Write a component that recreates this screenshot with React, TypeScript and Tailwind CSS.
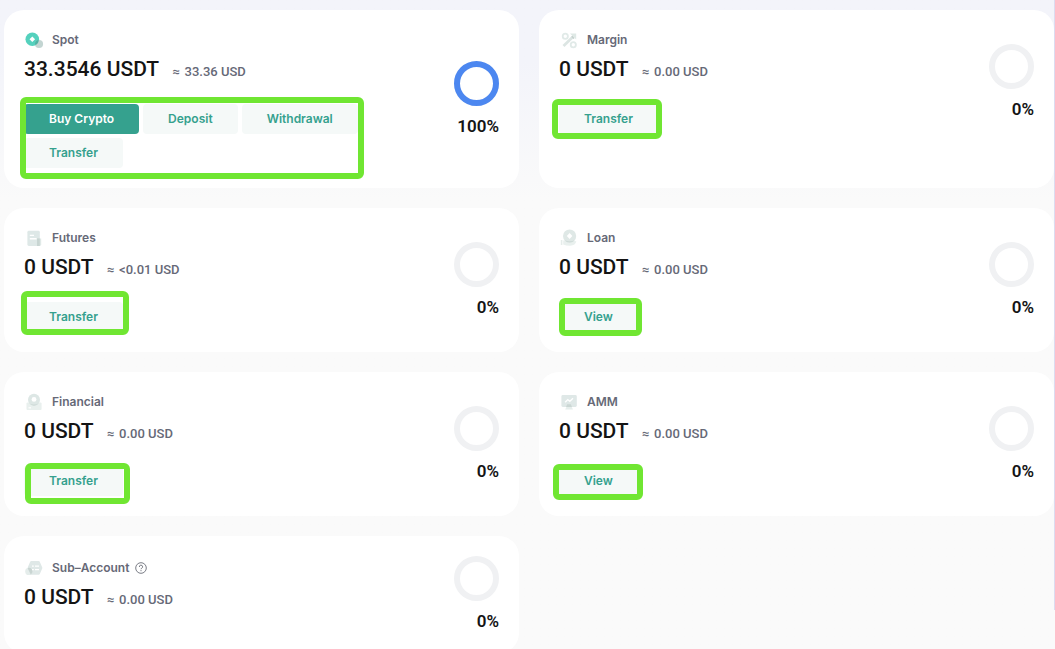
import React from 'react';
import { clsx } from 'clsx';

type Account = {
  name: string;
  icon: React.ReactNode;
  amount: string;
  usd: string;
  percent: number;
  actions: string[];
  highlight?: string;
  help?: boolean;
};

const SpotIcon = () => (
  <svg width="20" height="20" viewBox="0 0 20 20" aria-hidden="true">
    <circle cx="8.3" cy="9.2" r="6.8" fill="#54d1bd" />
    <path d="M8.3 6.4L11.1 9.2L8.3 12L5.5 9.2Z" fill="#fff" />
    <circle cx="15" cy="14" r="4.1" fill="#a3bfba" fillOpacity="0.65" />
    <path d="M11 13.4A4.1 4.1 0 0 1 14.7 9.9A6.8 6.8 0 0 1 11.7 15.1A4.1 4.1 0 0 1 11 13.4Z" fill="#4fb3a3" />
  </svg>
);

const MarginIcon = () => (
  <svg width="20" height="20" viewBox="0 0 20 20" fill="none" aria-hidden="true">
    <circle cx="6.3" cy="6.2" r="2.6" stroke="#e1eae8" strokeWidth="1.8" />
    <circle cx="14.3" cy="14.8" r="2.6" stroke="#e1eae8" strokeWidth="1.8" />
    <path d="M4.5 16L14.5 6.2" stroke="#dce5e3" strokeWidth="2.8" />
    <path d="M11 3.4H17.2V9.6Z" fill="#dfe9e6" />
    <path d="M12.8 6.2L15 8.6" stroke="#c5d1ce" strokeWidth="1.4" />
  </svg>
);

const FuturesIcon = () => (
  <svg width="20" height="20" viewBox="0 0 20 20" aria-hidden="true">
    <rect x="3.4" y="2.8" width="12.4" height="15.2" rx="1.4" fill="#dee8e7" />
    <path d="M13 10.4H17.2V16.6Q17.2 18 15.7 18H13Z" fill="#e0e9e7" />
    <path d="M13 10.4H15.8V18H13Z" fill="#c8d5d2" />
    <path d="M5.8 7.4H10M5.8 10.8H12.6" stroke="#fff" strokeWidth="1.4" />
  </svg>
);

const CoinHandIcon = () => (
  <svg width="20" height="20" viewBox="0 0 20 20" aria-hidden="true">
    <path d="M1.8 12H3.4V17H1.8Z" fill="#e6edeb" />
    <path d="M4.2 12.4H9L17.4 13.2Q16.5 16.8 12.5 17.6Q8 18 4.2 16.4Z" fill="#e9f0ee" />
    <circle cx="10.6" cy="8" r="6.6" fill="#dfe8e6" />
    <path d="M5.5 12.2A6.6 6.6 0 0 0 15.7 12.2Q10.6 14.4 5.5 12.2Z" fill="#cfdbd8" />
    <path d="M10.6 5L13.4 8L10.6 11L7.8 8Z" fill="#fff" />
  </svg>
);

const FinancialIcon = () => (
  <svg width="20" height="20" viewBox="0 0 20 20" aria-hidden="true">
    <path d="M2.5 11.6Q2.5 10.4 3.8 10.4H16.3Q17.6 10.4 17.6 11.6V17Q17.6 18 16.5 18H3.6Q2.5 18 2.5 17Z" fill="#e9f0ee" />
    <circle cx="10" cy="7.8" r="6" fill="#dde7e5" />
    <path d="M5.4 11.6A6 6 0 0 0 14.6 11.6Q10 13.4 5.4 11.6Z" fill="#cedad7" />
    <circle cx="10" cy="7.4" r="2.4" fill="#fff" />
    <path d="M4.5 15.8H7" stroke="#fff" strokeWidth="1.2" />
  </svg>
);

const AmmIcon = () => (
  <svg width="20" height="20" viewBox="0 0 20 20" aria-hidden="true">
    <rect x="2.4" y="3" width="15.4" height="12" rx="1.4" fill="#dfe8e7" />
    <path d="M8.4 13H11.8L14 17.6H6.2Z" fill="#e6eeec" />
    <path d="M8.2 12.2H11.8L13 15H7Z" fill="#cbd7d4" />
    <path d="M6.2 10.2L8.8 7.6L10.8 9.4L14 6.2" stroke="#fff" strokeWidth="1.4" fill="none" />
  </svg>
);

const SubAccountIcon = () => (
  <svg width="20" height="20" viewBox="0 0 20 20" aria-hidden="true">
    <circle cx="4.8" cy="13.4" r="3.6" fill="#e5edeb" />
    <path d="M7.4 3H14.6Q15.4 3 15.8 3.7L18.2 9.2Q18.4 9.8 18.2 10.4L15.8 16Q15.4 16.8 14.6 16.8H7.4Q6.6 16.8 6.2 16L3.8 10.4Q3.6 9.8 3.8 9.2L6.2 3.7Q6.6 3 7.4 3Z" fill="#dfe8e7" />
    <path d="M4.4 9.8A3.6 3.6 0 0 1 8.2 14.8L6.8 16.6L3.8 10.4Z" fill="#c9d5d2" />
    <path d="M8 8.2H9.8M11 8.2H15M8 11.6H9.8M11 11.6H15" stroke="#fff" strokeWidth="1.2" />
  </svg>
);

const HelpIcon = () => (
  <svg width="12" height="12" viewBox="0 0 12 12" fill="none" stroke="#6b6e78" aria-hidden="true">
    <circle cx="6" cy="6" r="5.3" strokeWidth="0.9" />
    <path d="M4.4 4.9A1.6 1.6 0 1 1 6.7 6.2Q6 6.5 6 7.2" strokeWidth="1" />
    <path d="M6 8.2V9.2" strokeWidth="1" />
  </svg>
);

const ACCOUNTS: Account[] = [
  {
    name: 'Spot',
    icon: <SpotIcon />,
    amount: '33.3546',
    usd: '33.36',
    percent: 100,
    actions: ['Buy Crypto', 'Deposit', 'Withdrawal', 'Transfer'],
    highlight: '-left-1 -top-[7px] w-[344px] h-[82px]',
  },
  { name: 'Margin', icon: <MarginIcon />, amount: '0', usd: '0.00', percent: 0, actions: ['Transfer'], highlight: '-left-[7px] -top-[5px] w-[110px] h-10' },
  { name: 'Futures', icon: <FuturesIcon />, amount: '0', usd: '<0.01', percent: 0, actions: ['Transfer'], highlight: '-left-[3px] -top-[11px] w-[108px] h-11' },
  { name: 'Loan', icon: <CoinHandIcon />, amount: '0', usd: '0.00', percent: 0, actions: ['View'], highlight: 'left-0 -top-1 w-[83px] h-[38px]' },
  { name: 'Financial', icon: <FinancialIcon />, amount: '0', usd: '0.00', percent: 0, actions: ['Transfer'], highlight: 'left-px -top-[3px] w-[105px] h-[41px]' },
  { name: 'AMM', icon: <AmmIcon />, amount: '0', usd: '0.00', percent: 0, actions: ['View'], highlight: '-left-[6px] -top-[2px] w-[90px] h-9' },
  { name: 'Sub–Account', icon: <SubAccountIcon />, amount: '0', usd: '0.00', percent: 0, actions: [], help: true },
];

const App: React.FC = () => {
  return (
    <div className="flex min-h-screen bg-[#fafafa] bg-linear-to-b from-[#f3f4fa] from-[60px] to-[#fafafa] to-[200px] font-['Inter','Liberation_Sans',sans-serif]">
      <main className="grid flex-1 grid-cols-2 content-start gap-5 pt-2.5 pl-1">
        {ACCOUNTS.map(a => (
          <AccountCard key={a.name} account={a} />
        ))}
      </main>
      <div className="h-[610px] w-px bg-[#dcdcf0]" />
    </div>
  );
};

const AccountCard = ({ account }: { account: Account }) => (
  <section className="rounded-[20px] bg-white p-5">
    <div className="flex items-center justify-between">
      <div>
        <h2 className="flex h-5 items-center gap-2 text-xs font-semibold text-[#666977]">
          {account.icon}
          <span>{account.name}</span>
          {account.help && (
            <button type="button" aria-label="Help" className="-ml-0.5">
              <HelpIcon />
            </button>
          )}
        </h2>
        <div className="mt-1 flex items-baseline gap-[13px] font-['Roboto','Liberation_Sans',sans-serif] font-medium">
          <span className="text-[21px] leading-[30px] text-[#141414]">{account.amount} USDT</span>
          <span className="flex gap-[5px] text-[13px] leading-5 text-[#666977]">
            <span>≈</span>
            <span>{account.usd} USD</span>
          </span>
        </div>
        <div className="relative mt-5 flex max-w-[344px] flex-wrap gap-1">
          {account.actions.map((label, i) => (
            <ActionButton key={label} label={label} primary={account.actions.length > 1 && i === 0} />
          ))}
          {account.highlight && (
            <div className={clsx('pointer-events-none absolute rounded-md border-[6px] border-[#70e632]', account.highlight)} />
          )}
        </div>
      </div>
      <Ring percent={account.percent} />
    </div>
  </section>
);

const ActionButton = ({ label, primary }: { label: string; primary: boolean }) => (
  <button
    type="button"
    className={clsx(
      'h-[30px] rounded px-[25px] text-xs font-semibold',
      primary ? 'bg-[#35a18e] text-white' : 'bg-[#f5f9f8] text-[#35a18e]'
    )}
  >
    {label}
  </button>
);

const Ring = ({ percent }: { percent: number }) => (
  <div className="flex flex-col items-end">
    <svg width="45" height="45" viewBox="0 0 45 45" fill="none" aria-hidden="true">
      <circle cx="22.5" cy="22.5" r="19.5" stroke="#f0f1f3" strokeWidth="6" />
      {percent > 0 && (
        <circle cx="22.5" cy="22.5" r="19.5" stroke="#4c87f0" strokeWidth="6" pathLength={100} strokeDasharray={`${percent} 100`} transform="rotate(-90 22.5 22.5)" />
      )}
    </svg>
    <span className="mt-2 font-['Roboto','Liberation_Sans',sans-serif] text-[17px] leading-6 font-semibold text-[#141414]">{percent}%</span>
  </div>
);

export default App;
